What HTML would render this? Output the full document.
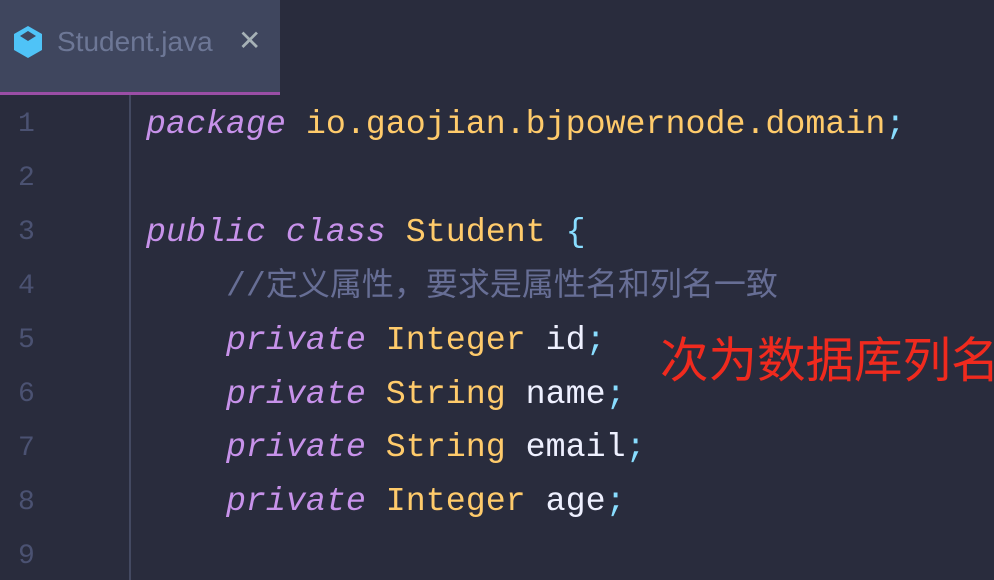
<!DOCTYPE html>
<html><head><meta charset="utf-8"><style>
body{margin:0;width:994px;height:580px;background:#292c3d;overflow:hidden;position:relative;font-family:"Liberation Mono","Noto Sans CJK SC",monospace}
.tab{position:absolute;left:0;top:0;width:280px;height:92px;background:#3f465e;border-bottom:3px solid #9a4ea6}
.tab .t{position:absolute;left:57px;top:26px;font:28px "Liberation Sans",sans-serif;color:#6d7796}
.tab .x{position:absolute;left:238px;top:24px;font:28px "Liberation Sans",sans-serif;color:#a6b1b6}
.gut{position:absolute;left:129px;top:95px;width:2px;height:485px;background:#434961}
.ln{position:absolute;left:18px;font-size:28px;color:#4b5272}
.code{position:absolute;left:146px;font-size:33.3px;color:#eef0ff;white-space:pre;line-height:53.9px}
.k{color:#c792ea;font-style:italic}.y{color:#ffcb6b}.c{color:#89ddff}.m{color:#676e95;font-family:"Liberation Mono","Noto Sans CJK SC",monospace}
.red{position:absolute;left:660px;top:321px;font:48.5px "Noto Sans CJK SC",sans-serif;color:#f02a1e;white-space:nowrap}
</style></head><body>
<div class="tab"><svg style="position:absolute;left:12px;top:25px" width="32" height="34" viewBox="0 0 32 34"><path d="M16 1 L30 9 L30 25 L16 33 L2 25 L2 9Z" fill="#4fc3f7"/><path d="M16 6 L24 11 L16 16 L8 11Z" fill="#3f465e"/></svg><span class="t">Student.java</span><span class="x">✕</span></div>
<div class="gut"></div>
<div class="ln" style="top:109px">1</div><div class="ln" style="top:163px">2</div><div class="ln" style="top:217px">3</div><div class="ln" style="top:271px">4</div><div class="ln" style="top:325px">5</div><div class="ln" style="top:379px">6</div><div class="ln" style="top:433px">7</div><div class="ln" style="top:487px">8</div><div class="ln" style="top:541px">9</div>
<div class="code" style="top:98px"><span class="k">package</span> <span class="y">io.gaojian.bjpowernode.domain</span><span class="c">;</span>

<span class="k">public</span> <span class="k">class</span> <span class="y">Student</span> <span class="c">{</span>
    <span class="m">//<span style="font-size:32px">定义属性，要求是属性名和列名一致</span></span>
    <span class="k">private</span> <span class="y">Integer</span> id<span class="c">;</span>
    <span class="k">private</span> <span class="y">String</span> name<span class="c">;</span>
    <span class="k">private</span> <span class="y">String</span> email<span class="c">;</span>
    <span class="k">private</span> <span class="y">Integer</span> age<span class="c">;</span>
</div>
<div class="red">次为数据库列名</div>
</body></html>
